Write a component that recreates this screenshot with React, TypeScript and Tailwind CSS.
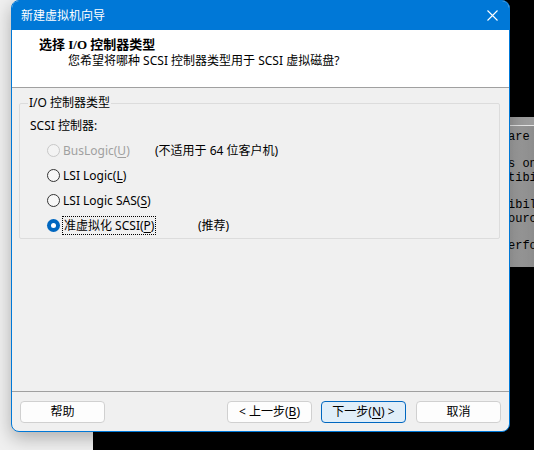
import React from 'react';

const ui = "font-['Noto_Sans','Noto_Sans_CJK_SC',sans-serif]";

// mnemonic letter, underlined like a Win32 accelerator
const Key = ({ k }: { k: string }) => <span className="underline underline-offset-[2px]">{k}</span>;

const Radio = ({ checked, disabled }: { checked?: boolean; disabled?: boolean }) => {
    if (checked) {
        return (
            <span className="w-[13px] h-[13px] rounded-full bg-[#0067c0] flex items-center justify-center shrink-0">
                <span className="w-[5px] h-[5px] rounded-full bg-white" />
            </span>
        );
    }
    return (
        <span
            className={
                disabled
                    ? 'w-[13px] h-[13px] rounded-full border border-[#c8c8c8] bg-[#f3f3f3] shrink-0'
                    : 'w-[13px] h-[13px] rounded-full border border-[#333333] bg-[#f7f7f7] shrink-0'
            }
        />
    );
};

const Button = ({ children, primary }: { children: React.ReactNode; primary?: boolean }) => (
    <button
        className={
            primary
                ? 'w-[85px] h-[22px] rounded-[4px] border border-[#0067c0] bg-[#e0eef9] text-[12px] leading-[16px] text-black flex items-center justify-center'
                : 'w-[85px] h-[22px] rounded-[4px] border border-[#d0d0d0] bg-[#fdfdfd] text-[12px] leading-[16px] text-black flex items-center justify-center'
        }
    >
        {children}
    </button>
);

const consoleLines = ['are', '', 's on', 'tibi', '', 'ibil', 'ourc', '', 'erfo'];

export default function App() {
    return (
        <div className={`relative w-[534px] h-[450px] overflow-hidden bg-[#f0f0f0] ${ui}`}>
            {/* windows behind the wizard */}
            <div className="absolute left-[93px] top-0 right-0 bottom-0 bg-black" />
            <div className="absolute left-[470px] top-[117px] right-0 h-[150px] flex flex-col">
                <div className="h-[8px] bg-[#9c9c9c]" />
                <div className="h-px bg-[#e4e4e4]" />
                <div className="flex-1 bg-gradient-to-r from-[#c4c4c4] to-[#8c8c8c] pt-[5px] pl-[38px] font-['Liberation_Mono',monospace] text-[12px] leading-[13.6px] text-black">
                    {consoleLines.map((l, i) => (
                        <div key={i} className="h-[13.6px] whitespace-pre">{l}</div>
                    ))}
                </div>
            </div>

            {/* wizard dialog */}
            <div className="absolute left-[11px] top-0 w-[499px] h-[432px] rounded-[8px] border border-[#0078d7] bg-[#f0f0f0] overflow-hidden flex flex-col shadow-[0_6px_18px_rgba(0,0,0,0.28)]">
                <div className="h-[29px] bg-[#0078d7] flex items-center justify-between pl-[9px] pr-[11px] shrink-0">
                    <span className="text-[12px] leading-[16px] text-white">新建虚拟机向导</span>
                    <svg width="11" height="11" viewBox="0 0 11 11">
                        <path d="M0.5 0.5 L10.5 10.5 M10.5 0.5 L0.5 10.5" stroke="white" strokeWidth="1.1" fill="none" />
                    </svg>
                </div>

                <div className="h-[58px] bg-white border-b border-[#a0a0a0] pt-[7px] shrink-0">
                    <div className="pl-[27px] text-[13px] leading-[16px] font-bold text-black font-['Liberation_Serif','Noto_Sans_CJK_SC',serif]">
                        选择 I/O 控制器类型
                    </div>
                    <div className="pl-[56px] text-[12px] leading-[16px] text-black">
                        您希望将哪种 SCSI 控制器类型用于 SCSI 虚拟磁盘?
                    </div>
                </div>

                <div className="flex-1 pt-[7px] pl-[7px] pr-[9px]">
                    <fieldset className="border border-[#dcdcdc] rounded-[2px] pl-[10px]">
                        <legend className="ml-[-2px] px-[1px] text-[12px] leading-[16px] text-black">I/O 控制器类型</legend>
                        <div className="pt-[7px] text-[12px] leading-[16px] text-black">SCSI 控制器:</div>
                        <div className="mt-[4px] flex flex-col text-[12px] leading-[16px]">
                            <div className="h-[25px] flex items-center pl-[17px]">
                                <Radio disabled />
                                <span className="ml-[3px] w-[92px] text-[#a0a0a0]">
                                    BusLogic(<Key k="U" />)
                                </span>
                                <span className="text-black">(不适用于 64 位客户机)</span>
                            </div>
                            <div className="h-[25px] flex items-center pl-[17px]">
                                <Radio />
                                <span className="ml-[3px] text-black">
                                    LSI Logic(<Key k="L" />)
                                </span>
                            </div>
                            <div className="h-[25px] flex items-center pl-[17px]">
                                <Radio />
                                <span className="ml-[3px] text-black">
                                    LSI Logic SAS(<Key k="S" />)
                                </span>
                            </div>
                            <div className="h-[25px] flex items-center pl-[17px]">
                                <Radio checked />
                                <span className="ml-[2px] w-[136px]">
                                    <span className="border border-dotted border-black px-px text-black">
                                        准虚拟化 SCSI(<Key k="P" />)
                                    </span>
                                </span>
                                <span className="text-black">(推荐)</span>
                            </div>
                        </div>
                    </fieldset>
                </div>

                <div className="border-t border-[#a0a0a0] pt-[9px] pb-[8px] px-[8px] flex items-center shrink-0">
                    <Button>帮助</Button>
                    <div className="ml-auto flex items-center">
                        <Button>
                            &lt; 上一步(<Key k="B" />)
                        </Button>
                        <div className="w-[9px]" />
                        <Button primary>
                            下一步(<Key k="N" />) &gt;
                        </Button>
                        <div className="w-[10px]" />
                        <Button>取消</Button>
                    </div>
                </div>
            </div>
        </div>
    );
}
